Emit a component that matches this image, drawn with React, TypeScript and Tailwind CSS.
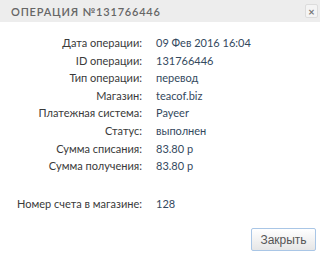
import React from 'react';

const rows: { label: string; value: string }[] = [
  { label: 'Дата операции:', value: '09 Фев 2016 16:04' },
  { label: 'ID операции:', value: '131766446' },
  { label: 'Тип операции:', value: 'перевод' },
  { label: 'Магазин:', value: 'teacof.biz' },
  { label: 'Платежная система:', value: 'Payeer' },
  { label: 'Статус:', value: 'выполнен' },
  { label: 'Сумма списания:', value: '83.80 р' },
  { label: 'Сумма получения:', value: '83.80 р' },
];

export default function App() {
  return (
    <div className="w-[320px] h-[255px] bg-white flex flex-col font-['Lato','Open_Sans',sans-serif] text-[11px]">
      <div className="h-[22px] bg-[#ededed] flex items-center justify-between pl-[11px] pr-[2px]">
        <span className="text-[#666] font-semibold tracking-[0.8px] text-[11px] leading-none pt-[1px]">
          ОПЕРАЦИЯ №131766446
        </span>
        <button className="w-[13px] h-[14px] border border-[#dcdcdc] bg-[#f4f4f4] rounded-[2px] flex items-center justify-center text-[#777] text-[11px] font-bold leading-none">
          ×
        </button>
      </div>

      <div className="flex-1 flex flex-col pt-[12px]">
        <div className="grid grid-cols-[142px_1fr] gap-x-[14px]">
          {rows.map((r) => (
            <React.Fragment key={r.label}>
              <div className="h-[17.6px] leading-[17.6px] text-right text-[#3a3a3a]">{r.label}</div>
              <div className="h-[17.6px] leading-[17.6px] text-[#34495e]">{r.value}</div>
            </React.Fragment>
          ))}
          <div className="h-[20px]" />
          <div className="h-[20px]" />
          <div className="h-[17.6px] leading-[17.6px] text-right text-[#3a3a3a]">Номер счета в магазине:</div>
          <div className="h-[17.6px] leading-[17.6px] text-[#34495e]">128</div>
        </div>
      </div>

      <div className="flex justify-end pr-[4px] pb-[4px]">
        <button className="w-[65px] h-[23px] border border-[#a9c6e6] rounded-[2px] bg-gradient-to-b from-white to-[#e6e6e6] text-[#555] text-[12px] font-['Liberation_Sans',sans-serif]">
          Закрыть
        </button>
      </div>
    </div>
  );
}
